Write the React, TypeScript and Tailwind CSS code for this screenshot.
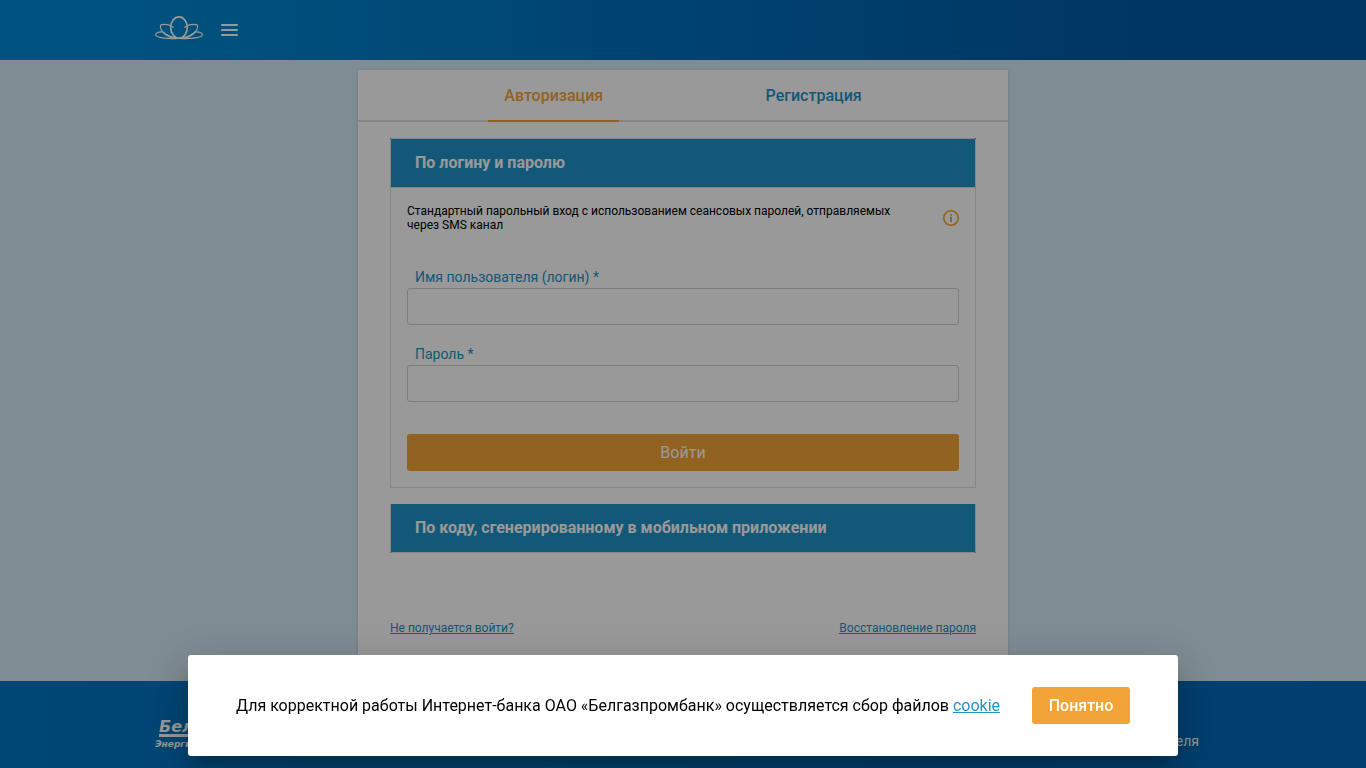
import { useState } from 'react';

const tabs = [
  { id: 'login', label: 'Авторизация' },
  { id: 'register', label: 'Регистрация' },
];

function LotusLogo(): React.JSX.Element {
  return (
    <svg className="w-12 h-6" viewBox="0 0 48 24" fill="none" stroke="#fff" aria-hidden="true">
      <ellipse cx="24" cy="11.5" rx="8.3" ry="10.6" strokeWidth="1.7" />
      {/* Upper petals */}
      <path
        d="M18.8 11.6C15.5 8.9 9.5 7.4 6 8.9C3.8 12 8.5 18.8 15 21.3C17.5 22.2 20 22.4 22 22.4"
        strokeWidth="1.2"
      />
      <path
        d="M29.2 11.6C32.5 8.9 38.5 7.4 42 8.9C44.2 12 39.5 18.8 33 21.3C30.5 22.2 28 22.4 26 22.4"
        strokeWidth="1.2"
      />
      {/* Lower petals */}
      <path d="M7.5 15.8C3.5 15.6 .6 16.8 .6 18.7C.8 21.4 11 23.2 24 22.4C17 21.8 11 18.8 7.5 15.8" strokeWidth="1.2" />
      <path d="M40.5 15.8C44.5 15.6 47.4 16.8 47.4 18.7C47.2 21.4 37 23.2 24 22.4C31 21.8 37 18.8 40.5 15.8" strokeWidth="1.2" />
    </svg>
  );
}

function Header(): React.JSX.Element {
  return (
    <header className="h-15 bg-linear-to-r from-[#0089d5] from-10% to-[#005aa5] to-85%">
      <div className="mx-auto flex h-full max-w-[1056px] items-center gap-4">
        <a href="#" aria-label="Главная" className="-mt-1">
          <LotusLogo />
        </a>
        <button type="button" aria-label="Меню" className="p-0.5">
          <svg className="w-[17px] h-3" viewBox="0 0 17 12" fill="none" stroke="#fff" strokeWidth="2" strokeLinecap="round">
            <path d="M1 1h15M1 6h15M1 11h15" />
          </svg>
        </button>
      </div>
    </header>
  );
}

interface FieldProps {
  id: string;
  label: string;
  type: string;
}

function Field({ id, label, type }: FieldProps): React.JSX.Element {
  return (
    <div className="flex flex-col gap-px">
      <label htmlFor={id} className="px-2 text-sm text-[#2093c8]">
        {label} *
      </label>
      <input
        id={id}
        type={type}
        className="h-[37px] w-full rounded-[3px] border border-[#ced0da] bg-white px-2 text-base outline-none"
      />
    </div>
  );
}

function LoginForm(): React.JSX.Element {
  return (
    <form className="border-x border-b border-[#dfdfe2] p-4" onSubmit={(e) => e.preventDefault()}>
      <div className="flex items-center justify-between">
        <p className="max-w-[500px] text-xs leading-[14px] text-black">
          Стандартный парольный вход с использованием сеансовых паролей, отправляемых через SMS канал
        </p>
        <button type="button" aria-label="Подробнее">
          <svg className="w-4 h-4" viewBox="0 0 16 16" fill="none" stroke="#f2a436">
            <circle cx="8" cy="8" r="7.2" strokeWidth="1.6" />
            <path d="M8 6.8v5.2M8 4v1.7" strokeWidth="1.9" />
          </svg>
        </button>
      </div>
      <div className="mt-[35px] flex flex-col gap-[19px]">
        <Field id="username" label="Имя пользователя (логин)" type="text" />
        <Field id="password" label="Пароль" type="password" />
      </div>
      <button type="submit" className="mt-8 h-[37px] w-full rounded-[3px] bg-[#f2a436] text-base text-white">
        Войти
      </button>
    </form>
  );
}

function AuthCard(): React.JSX.Element {
  const [active, setActive] = useState('login');

  return (
    <div className="mx-auto w-full max-w-[650px] flex-1 bg-white shadow-[0_1px_3px_rgba(0,60,110,0.2)]">
      <div role="tablist" className="flex justify-evenly border-b-2 border-[#dedee6]">
        {tabs.map((tab) => (
          <button
            key={tab.id}
            type="button"
            role="tab"
            aria-selected={active === tab.id}
            onClick={() => setActive(tab.id)}
            className={`-mb-0.5 h-[52px] border-b-2 px-4 pt-0.5 text-base font-medium ${
              active === tab.id ? 'border-[#f2a436] text-[#f2a436]' : 'border-transparent text-[#2093c8]'
            }`}
          >
            {tab.label}
          </button>
        ))}
      </div>

      <div className="px-8 py-4">
        <section>
          <h2 className="bg-[#2093c8]">
            <button
              type="button"
              className="block h-[50px] w-full rounded-t-[2px] border border-[#dfdfe2] px-6 text-left text-base font-bold text-white"
            >
              По логину и паролю
            </button>
          </h2>
          <LoginForm />
        </section>
        <section className="mt-4">
          <h2 className="bg-[#2093c8]">
            <button
              type="button"
              className="block h-[49px] w-full rounded-b-[2px] border-x border-b border-[#dfdfe2] px-6 text-left text-base font-bold text-white"
            >
              По коду, сгенерированному в мобильном приложении
            </button>
          </h2>
        </section>
        <div className="mt-[67px] flex justify-between text-xs text-[#2093c8] underline">
          <a href="#">Не получается войти?</a>
          <a href="#">Восстановление пароля</a>
        </div>
      </div>
    </div>
  );
}

function Footer(): React.JSX.Element {
  return (
    <footer className="h-[87px] bg-linear-to-r from-[#0077c3] to-[#0068b8] text-white">
      <div className="mx-auto flex h-full max-w-[1056px] items-center justify-between pt-4 pr-3">
        <div className="flex flex-col gap-px pt-1 font-['DejaVu_Sans'] font-bold italic">
          <span className="mx-1 border-b-3 border-white text-base leading-[14px]">Белгазпромбанк</span>
          <span className="text-[9px] leading-3">Энергия вашего успеха</span>
        </div>
        <a href="#" className="pt-4 text-sm">
          Руководство пользователя
        </a>
      </div>
    </footer>
  );
}

function CookieDialog({ onClose }: { onClose: () => void }): React.JSX.Element {
  return (
    <div className="fixed inset-0 z-50 flex items-end justify-center bg-black/40 pb-3">
      <div
        role="dialog"
        aria-modal="true"
        aria-labelledby="cookie-text"
        className="flex items-center gap-8 rounded-[3px] bg-white px-12 py-8 shadow-[0_11px_15px_-7px_rgba(0,0,0,0.2),0_24px_38px_3px_rgba(0,0,0,0.14),0_9px_46px_8px_rgba(0,0,0,0.12)]"
      >
        <p id="cookie-text" className="text-base text-black">
          Для корректной работы Интернет-банка ОАО «Белгазпромбанк» осуществляется сбор файлов{' '}
          <a href="#" className="text-[#2093c8] underline">
            cookie
          </a>
        </p>
        <button
          type="button"
          onClick={onClose}
          className="h-[37px] min-w-[98px] rounded-[3px] bg-[#f2a436] px-4 text-base font-medium text-white"
        >
          Понятно
        </button>
      </div>
    </div>
  );
}

export default function App(): React.JSX.Element {
  const [showCookies, setShowCookies] = useState(true);

  return (
    <div className="flex min-h-screen flex-col bg-[#d5e9f5] font-[Roboto,sans-serif]">
      <Header />
      <main className="flex flex-1 flex-col pt-2.5">
        <AuthCard />
      </main>
      <Footer />
      {showCookies && <CookieDialog onClose={() => setShowCookies(false)} />}
    </div>
  );
}
